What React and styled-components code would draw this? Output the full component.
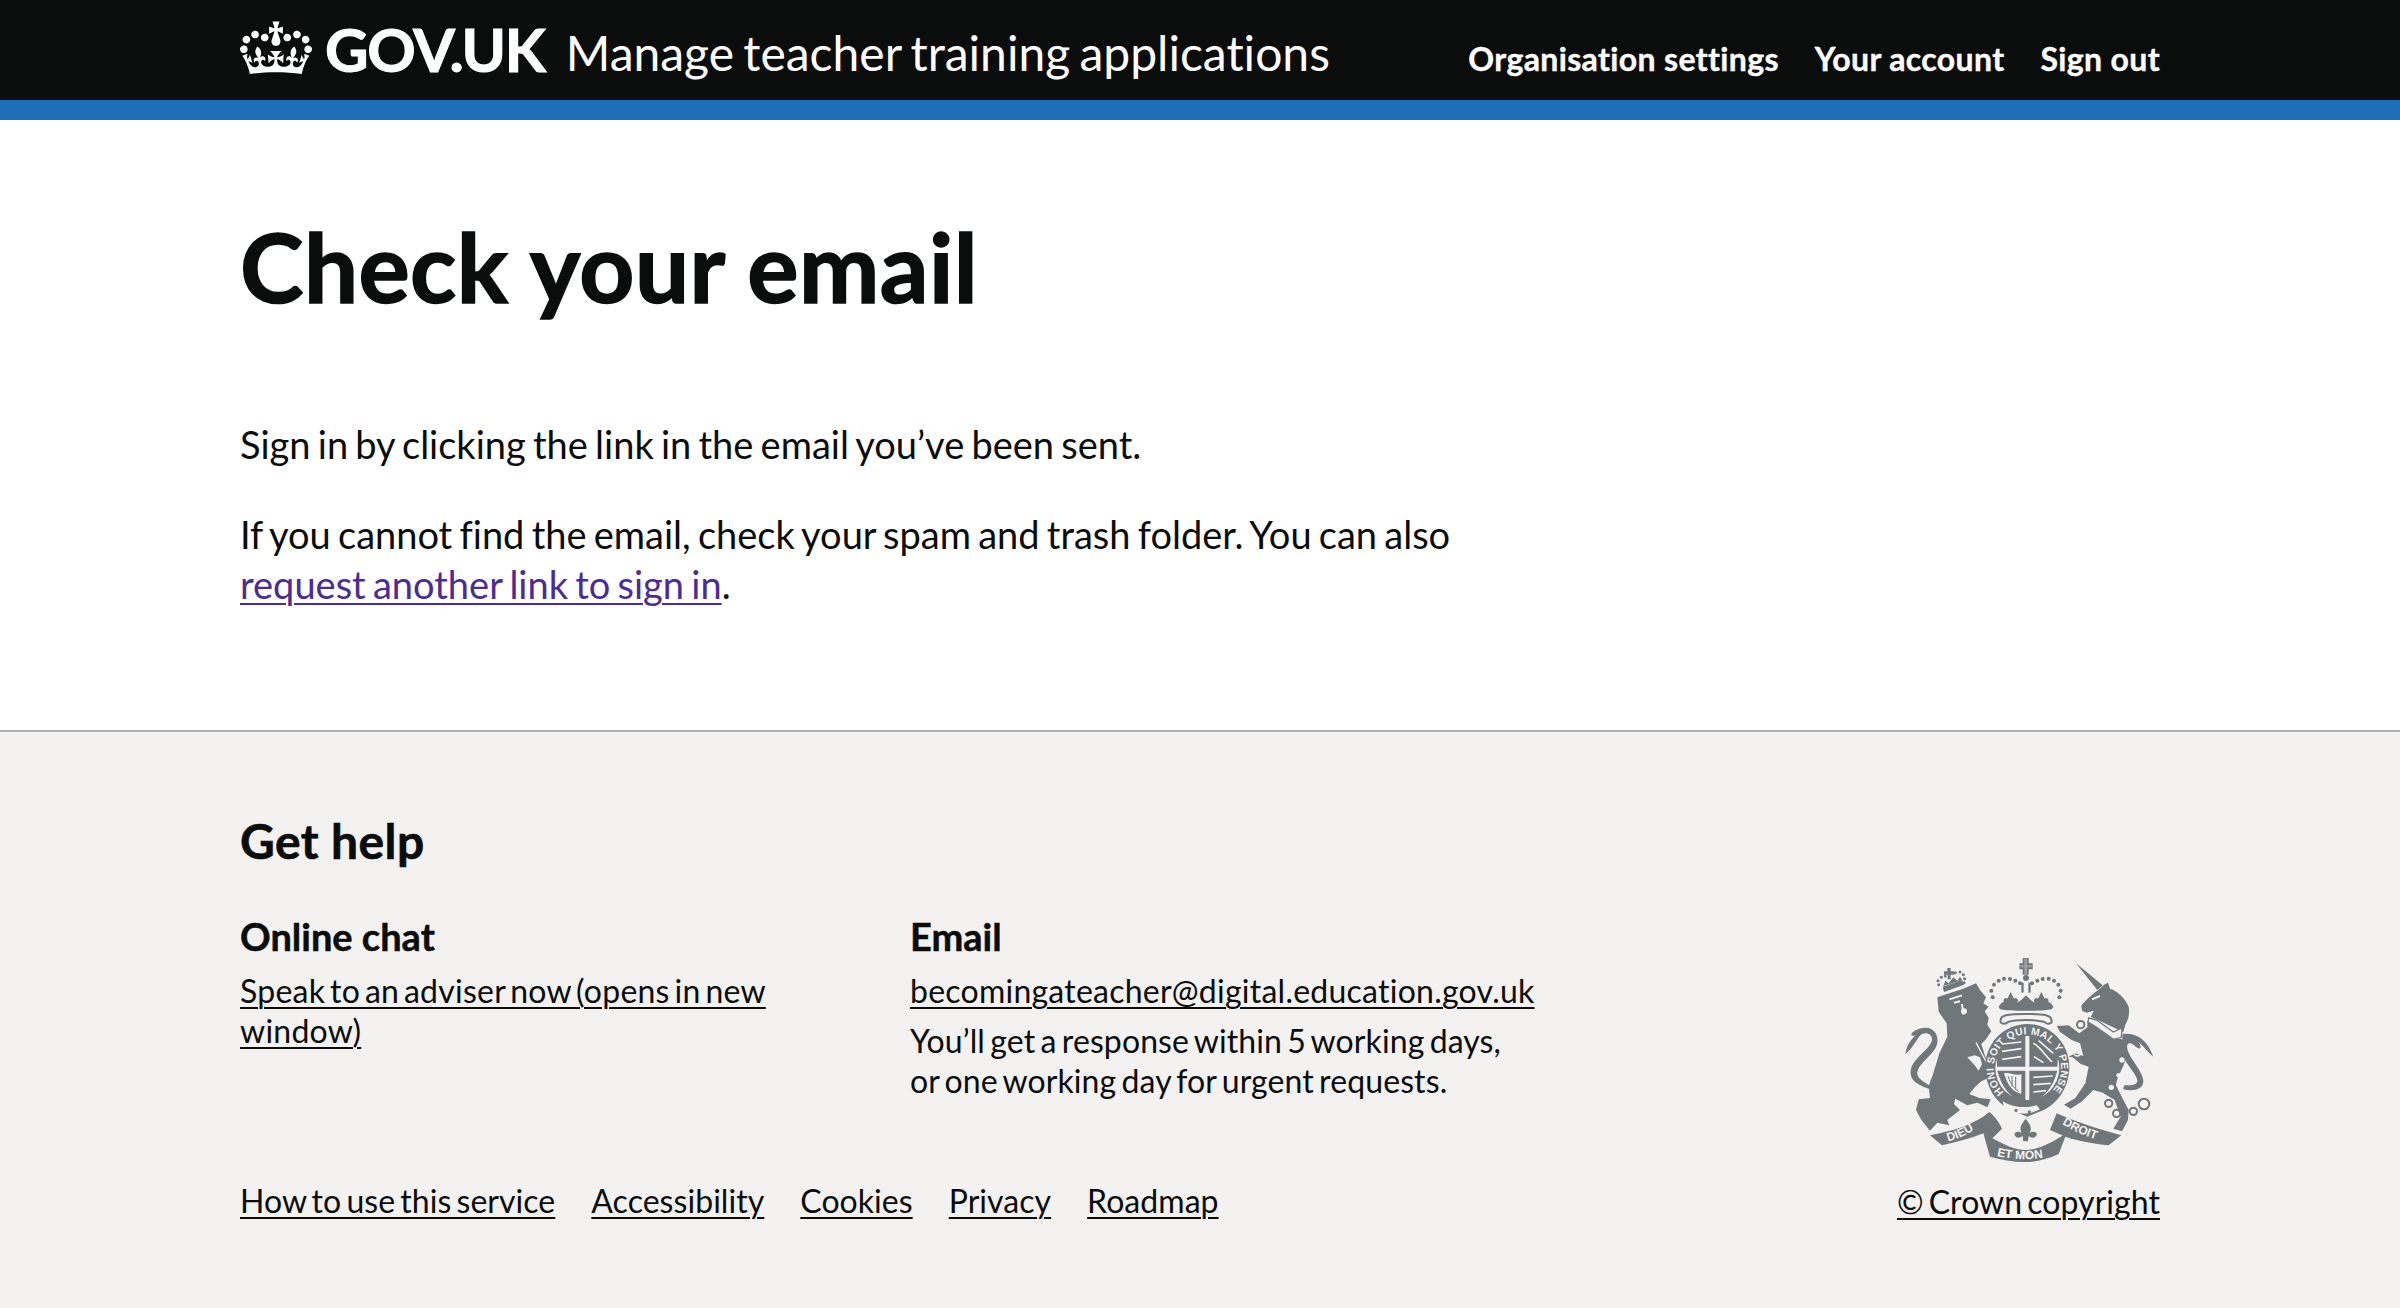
import React from "react";
import styled, { createGlobalStyle } from "styled-components";

const GlobalStyle = createGlobalStyle`
  html, body {
    margin: 0;
    padding: 0;
    background: #f3f2f1;
    color: #0b0c0c;
    font-family: Lato, "Noto Sans", Arial, sans-serif;
    font-variant-ligatures: none;
  }
`;

const Wrapper = styled.div`
  width: 1920px;
  margin: 0 auto;
`;

const Header = styled.header`
  background: #0b0c0c;
  border-bottom: 20px solid #1d70b8;
  height: 100px;
  color: #fff;
`;

const HeaderInner = styled(Wrapper)`
  display: flex;
  justify-content: space-between;
  align-items: flex-start;
`;

const Brand = styled.div`
  display: flex;
  align-items: flex-start;
`;

const Crown = styled.svg`
  width: 72px;
  height: 54px;
  margin-top: 21px;
  fill: currentColor;
`;

const Logotype = styled.span`
  font-size: 60px;
  line-height: 60px;
  font-weight: 700;
  margin: 19px 0 0 13px;
  letter-spacing: -1.2px;
  -webkit-text-stroke: 1px currentColor;
`;

const ServiceName = styled.span`
  font-size: 48px;
  line-height: 60px;
  margin: 23px 0 0 21px;
  word-spacing: -3px;
`;

const Nav = styled.nav`
  display: flex;
  gap: 36px;
  margin-top: 39px;
`;

const NavLink = styled.a`
  color: #fff;
  font-size: 32px;
  line-height: 40px;
  font-weight: 700;
  letter-spacing: 0.36px;
  -webkit-text-stroke: 0.4px currentColor;
`;

const Main = styled.main`
  background: #fff;
  height: 610px;
  overflow: hidden;
`;

const Title = styled.h1`
  margin: 0;
  padding-top: 96px;
  font-size: 96px;
  line-height: 100px;
  font-weight: 700;
  letter-spacing: 0.4px;
  -webkit-text-stroke: 1.5px currentColor;
`;

const Body = styled.div`
  width: 1280px;
  padding-top: 103px;
`;

const Para = styled.p`
  margin: 0 0 40px;
  font-size: 38px;
  line-height: 50px;
  word-spacing: -2.5px;
`;

const VisitedLink = styled.a`
  color: #4c2c92;
  text-decoration: underline;
  text-decoration-thickness: 2px;
  text-underline-offset: 4px;
`;

const Footer = styled.footer`
  background: #f3f2f1;
  border-top: 2px solid #b1b4b6;
  height: 576px;
`;

const FooterInner = styled(Wrapper)`
  display: flex;
  justify-content: space-between;
`;

const FooterMain = styled.div`
  display: flex;
  flex-direction: column;
`;

const HelpTitle = styled.h2`
  margin: 0;
  padding-top: 79px;
  font-size: 48px;
  line-height: 60px;
  font-weight: 700;
  letter-spacing: 0.4px;
  -webkit-text-stroke: 0.6px currentColor;
`;

const HelpColumns = styled.div`
  display: flex;
  gap: 100px;
  padding-top: 40px;
  height: 240px;
  box-sizing: border-box;
`;

const HelpColumn = styled.div`
  width: ${(p) => p.$width}px;
`;

const HelpHeading = styled.h3`
  margin: 0 0 10px;
  font-size: 38px;
  line-height: 50px;
  font-weight: 700;
  -webkit-text-stroke: 0.5px currentColor;
`;

const FooterLink = styled.a`
  color: #0b0c0c;
  font-size: 32px;
  line-height: 40px;
  text-decoration: underline;
  text-decoration-thickness: 2px;
  text-underline-offset: 4px;
  letter-spacing: ${(p) => (p.$help ? "0.24px" : "0.05px")};
  word-spacing: ${(p) => (p.$help ? "-3.6px" : "-3.1px")};
`;

const HelpText = styled.p`
  margin: 10px 0 0;
  font-size: 32px;
  line-height: 40px;
  letter-spacing: 0.1px;
  word-spacing: -3px;
`;

const MetaLinks = styled.div`
  display: flex;
  gap: 36px;
  padding-top: 70px;
`;

const Copyright = styled.div`
  display: flex;
  flex-direction: column;
  align-items: flex-end;
  padding-top: 208px;
`;

const ArmsSvg = styled.svg`
  width: 300px;
  height: 240px;
  margin: 0 -20px 2px 0;
`;

const CROWN_PATH = "M25 30.2c3.5 1.5 7.7-.2 9.1-3.7 1.5-3.6-.2-7.8-3.9-9.2-3.6-1.4-7.6.3-9.1 3.9-1.4 3.5.3 7.5 3.9 9zM9 39.5c3.6 1.5 7.8-.2 9.2-3.7 1.5-3.6-.2-7.8-3.9-9.1-3.6-1.5-7.6.2-9.1 3.8-1.4 3.5.3 7.5 3.8 9zM4.4 57.2c3.5 1.5 7.7-.2 9.1-3.8 1.5-3.6-.2-7.7-3.9-9.1-3.5-1.5-7.6.3-9.1 3.8-1.4 3.5.3 7.6 3.9 9.1zm38.3-21.4c3.5 1.5 7.7-.2 9.1-3.8 1.5-3.6-.2-7.7-3.9-9.1-3.6-1.5-7.6.3-9.1 3.8-1.3 3.6.4 7.7 3.9 9.1zm64.4-5.6c-3.6 1.5-7.8-.2-9.1-3.7-1.5-3.6.2-7.8 3.8-9.2 3.6-1.4 7.7.3 9.2 3.9 1.3 3.5-.4 7.5-3.9 9zm15.9 9.3c-3.6 1.5-7.7-.2-9.1-3.7-1.5-3.6.2-7.8 3.7-9.1 3.6-1.5 7.7.2 9.2 3.8 1.5 3.5-.3 7.5-3.8 9zm4.7 17.7c-3.6 1.5-7.8-.2-9.2-3.8-1.5-3.6.2-7.7 3.9-9.1 3.6-1.5 7.7.3 9.2 3.8 1.3 3.5-.4 7.6-3.9 9.1zM89.3 35.8c-3.6 1.5-7.8-.2-9.2-3.8-1.4-3.6.2-7.7 3.9-9.1 3.6-1.5 7.7.3 9.2 3.8 1.4 3.6-.3 7.7-3.9 9.1zM69.7 17.7l8.9 4.7V9.3l-8.9 2.8c-.2-.3-.5-.6-.9-.9L72.4 0H59.6l3.5 11.2c-.3.3-.6.5-.9.9l-8.8-2.8v13.1l8.8-4.7c.3.3.6.7.9.9l-5 15.4v.1c-.2.8-.4 1.6-.4 2.4 0 4.1 3.1 7.5 7 8.1h.2c.3 0 .7.1 1 .1.4 0 .7 0 1-.1h.2c4-.6 7.1-4.1 7.1-8.1 0-.8-.1-1.7-.4-2.4V34l-5.1-15.4c.4-.2.7-.6 1-.9zM66 92.8c16.9 0 32.8 1.1 47.1 3.2 4-16.9 8.9-26.7 14-33.5l-9.6-3.4c1 4.9 1.1 7.2 0 10.2-1.5-1.4-3-4.3-4.2-8.7L108.6 76c2.8-2 5-3.2 7.5-3.3-4.4 9.4-10 11.9-13.6 11.2-4.3-.8-6.3-4.6-5.6-7.9 1-4.7 5.7-5.9 8-.5 4.3-8.7-3-11.4-7.6-8.8 7.1-7.2 7.9-13.5 2.1-21.1-8 6.1-8.1 12.3-4.5 20.8-4.7-5.4-12.1-2.5-9.5 6.2 3.4-5.2 7.9-2 7.2 3.1-.6 4.3-6.4 7.8-13.5 7.2-10.3-.9-10.9-8-11.2-13.8 2.5-.5 7.1 1.8 11 7.3L80.2 60c-4.1 4.4-8 5.3-12.3 5.4 1.4-4.4 8-11.6 8-11.6H55.5s6.4 7.2 7.9 11.6c-4.2-.1-8-1-12.3-5.4l1.4 16.4c3.9-5.5 8.5-7.7 10.9-7.3-.3 5.8-.9 12.8-11.1 13.8-7.2.6-12.9-2.9-13.5-7.2-.7-5 3.8-8.3 7.1-3.1 2.7-8.7-4.6-11.6-9.4-6.2 3.7-8.5 3.6-14.7-4.6-20.8-5.8 7.6-5 13.9 2.2 21.1-4.7-2.6-11.9.1-7.7 8.8 2.3-5.5 7.1-4.2 8.1.5.7 3.3-1.3 7.1-5.7 7.9-3.5.7-9-1.8-13.5-11.2 2.5.1 4.7 1.3 7.5 3.3l-4.7-15.4c-1.2 4.4-2.7 7.2-4.3 8.7-1.1-3-.9-5.3 0-10.2l-9.5 3.4c5 6.9 9.9 16.7 14 33.5 14.8-2.1 30.8-3.2 47.7-3.2z";

const GREY = "#6f777b";
const BG = "#f3f2f1";
const ARMS_FONT = "'Liberation Sans', Arial, sans-serif";

const BEADS = [[338, 172], [334, 152], [342, 134], [356, 122], [372, 116], [390, 117], [406, 122], [420, 130], [456, 130], [472, 122], [488, 117], [506, 116], [522, 122], [535, 134], [542, 152], [538, 172]];
const LION_BEADS = [[176, 134], [174, 122], [184, 112], [196, 108], [226, 98], [240, 96], [250, 104], [254, 116], [252, 128]];

// coat of arms, drawn in the 900x720 grid of a 3x crop
function CoatOfArms() {
  return (
    <ArmsSvg viewBox="0 0 900 720" aria-label="Royal coat of arms">
      <defs>
        <path id="ringText" d="M372 457 A101 101 0 1 1 512 457" />
        <path id="dieuText" d="M204 604 Q264 590 316 542" />
        <path id="etMonText" d="M350 648 Q435 668 530 646" />
        <path id="droitText" d="M546 552 Q600 586 676 606" />
      </defs>

      {/* lion */}
      <g fill={GREY}>
        <path d="M172 172 L212 158 L250 146 L288 130 L300 150 L318 172 L310 190 L326 200 L314 214 L326 234 L322 254 L334 274 L318 298 L304 312 L316 350 L336 392 L330 412 L304 424 L284 442 L268 462 L298 474 L332 478 L322 502 L292 488 L262 496 L226 476 L222 492 L240 510 L202 540 L208 556 L172 548 L150 572 L124 540 L108 510 L116 478 L150 474 L146 438 L160 400 L178 340 L202 290 L200 250 L176 215 Z" />
        <path d="M128 264 C158 258 176 282 172 308 C166 344 120 362 112 396 C108 412 130 426 152 438 L146 446 C112 434 88 420 92 392 C98 352 154 328 156 298 C156 282 140 276 126 282 C112 290 104 320 76 342 C80 320 88 304 106 286 C84 294 92 270 128 264 Z" />
      </g>
      <path d="M208 178 L246 166 M222 188 L240 184 M246 192 L250 224" stroke={BG} strokeWidth="6" fill="none" />
      <circle cx="252" cy="214" r="9" fill={BG} />
      <path d="M288 308 L322 372" stroke={BG} strokeWidth="4" fill="none" />
      <path d="M262 352 L284 346 L300 352 L306 372 L296 392 L284 376 Z" fill={BG} />

      {/* lion's crown */}
      {LION_BEADS.map(([x, y]) => (
        <circle key={x + "-" + y} cx={x} cy={y} r="4.5" fill={GREY} />
      ))}
      <path d="M188 140 L192 156 L252 134 L246 120 Z" fill={GREY} />
      <path d="M202 94 V84 H212 V94 H222 V104 H212 V118 H203 V104 H192 V94 Z" fill={GREY} />
      <path d="M190 138 L196 122 L206 130 L220 112 L232 122 L240 110 L246 120 Z" fill={GREY} />

      {/* royal crown */}
      <path d="M428 70 V54 H446 V70 H458 V88 H446 V104 H428 V88 H418 V70 Z" fill={GREY} />
      <path d="M433 56 H441 V102 H433 Z M420 76 H456 V82 H420 Z" fill={BG} opacity="0.35" />
      <circle cx="438" cy="114" r="9" fill={GREY} />
      <rect x="424" y="128" width="7" height="30" fill={GREY} />
      <rect x="445" y="128" width="7" height="30" fill={GREY} />
      {BEADS.map(([x, y]) => (
        <circle key={x + "-" + y} cx={x} cy={y} r="6" fill={GREY} />
      ))}
      <path d="M356 200 C362 190 368 186 372 186 C366 178 378 170 382 176 L392 156 L402 176 C408 170 418 178 412 188 L424 180 L438 166 L452 180 L464 188 C458 178 468 170 474 176 L484 156 L494 176 C498 170 510 178 504 186 C508 186 514 190 520 200 L516 208 C490 214 386 214 360 208 Z" fill={GREY} />
      <path d="M362 240 C362 226 380 222 438 222 C496 222 514 226 514 240 C520 252 500 254 494 246 C470 238 406 238 384 246 C376 254 358 252 362 240 Z" fill="none" stroke={GREY} strokeWidth="6" />

      {/* garter and shield */}
      <path d="M442 252 C512 252 568 310 568 380 C568 450 524 500 476 516 L442 530 L408 516 C358 500 316 450 316 380 C316 310 372 252 442 252 Z" fill={GREY} />
      <circle cx="442" cy="384" r="96" fill={BG} />
      <path d="M356 310 C376 290 412 284 436 285 V380 H351 C350 354 348 330 356 310 Z" fill={GREY} />
      <path d="M448 285 C474 284 508 290 528 310 C536 330 534 354 532 380 H448 Z" fill={GREY} />
      <path d="M352 392 H436 V486 C404 484 366 450 352 392 Z" fill={GREY} />
      <path d="M448 392 H532 C518 450 480 484 448 486 Z" fill={GREY} />
      <path d="M368 312 L424 306 M366 334 L424 326 M366 358 L424 350" stroke={BG} strokeWidth="5" />
      <path d="M460 310 C480 320 490 340 516 366 M476 302 L520 340 M462 350 L490 368" stroke={BG} strokeWidth="5" fill="none" />
      <path d="M460 412 L518 408 M460 434 L512 430 M460 456 L498 452" stroke={BG} strokeWidth="5" />
      <path d="M372 400 C390 396 408 410 424 402 L424 462 C402 456 384 442 372 400 Z" fill={BG} />
      <path d="M384 408 C394 438 404 446 416 454 M396 408 V440 M407 410 V448" stroke={GREY} strokeWidth="3" fill="none" />
      <text fontFamily={ARMS_FONT} fontSize="31" fontWeight="700" fill={BG}>
        <textPath href="#ringText" textLength="470">HONI SOIT QUI MAL Y PENSE</textPath>
      </text>
      <path d="M368 484 C392 498 420 508 470 496 L480 508 C440 530 396 520 372 504 Z" fill={BG} />
      <circle cx="408" cy="511" r="5" fill={GREY} />
      <circle cx="448" cy="516" r="5" fill={GREY} />

      {/* unicorn */}
      <g fill={GREY}>
        <path d="M588 70 L668 136 L652 150 Z" />
        <path d="M604 198 C612 184 632 166 652 152 C664 142 672 132 684 128 L690 146 C712 152 736 176 746 200 C750 224 744 240 736 254 L730 276 L722 272 L632 230 L642 212 L620 218 L606 212 Z" />
        <path d="M622 244 L700 298 L724 296 C738 316 742 340 734 366 C726 392 710 412 708 436 L730 480 L746 510 L744 540 L726 574 L700 566 L722 530 L704 480 L668 458 L640 450 L606 484 L572 506 L552 494 L586 474 L616 430 L626 380 L602 372 L578 352 L566 350 L586 340 L610 348 L600 310 L575 300 L540 276 L530 258 L566 256 L598 280 L622 262 Z" />
        <path d="M728 282 C768 278 800 296 820 350 C802 336 790 318 776 306 C790 330 776 330 762 316 C750 304 738 310 742 326 C748 356 790 394 790 424 C790 448 760 456 730 448 L732 434 C754 438 772 434 772 422 C770 396 726 368 724 324 Z" />
      </g>
      <path d="M626 234 L650 240 L700 276 L726 264 L724 292 L700 298 L650 262 L624 246 Z" fill={BG} stroke={GREY} strokeWidth="4" />
      <path d="M636 178 L660 168" stroke={BG} strokeWidth="6" />
      <g fill="none" stroke={GREY} strokeWidth="6">
        <circle cx="602" cy="254" r="11" />
        <circle cx="686" cy="490" r="11" />
        <circle cx="710" cy="520" r="11" />
        <circle cx="760" cy="514" r="11" />
        <circle cx="792" cy="492" r="16" />
      </g>
      <g fill="none" stroke={BG} strokeWidth="5">
        <circle cx="592" cy="338" r="10" />
      </g>
      <g fill={BG}>
        <circle cx="726" cy="360" r="8" />
        <circle cx="716" cy="406" r="7" />
        <circle cx="694" cy="442" r="8" />
        <circle cx="730" cy="432" r="6" />
      </g>

      {/* motto scrolls */}
      <g fill={GREY}>
        <path d="M150 586 C220 572 280 556 328 516 C346 530 360 552 366 566 L336 596 L310 580 C270 596 230 606 186 616 Z" />
        <path d="M310 580 C350 600 392 630 436 630 C480 630 520 604 560 580 L536 642 C500 658 470 666 436 666 C396 666 360 658 330 650 Z" />
        <path d="M530 520 C590 546 650 566 724 586 L686 616 C640 610 596 604 556 590 L510 570 Z" />
      </g>
      <path d="M437 536 C450 552 458 566 448 580 C464 568 478 582 466 590 C460 596 450 592 446 588 L444 604 H430 L428 588 C422 592 414 596 408 590 C396 582 410 568 426 580 C416 566 424 552 437 536 Z" fill={GREY} />
      <g fontFamily={ARMS_FONT} fontWeight="700" fontSize="36" fill={BG}>
        <text><textPath href="#dieuText">DIEU</textPath></text>
        <text><textPath href="#etMonText">ET MON</textPath></text>
        <text><textPath href="#droitText">DROIT</textPath></text>
      </g>
    </ArmsSvg>
  );
}

export default function App() {
  return (
    <>
      <GlobalStyle />
      <Header>
        <HeaderInner>
          <Brand>
            <Crown viewBox="0 0 132 97" aria-hidden="true">
              <path fillRule="evenodd" d={CROWN_PATH} />
            </Crown>
            <Logotype>GOV.UK</Logotype>
            <ServiceName>Manage teacher training applications</ServiceName>
          </Brand>
          <Nav>
            <NavLink>Organisation settings</NavLink>
            <NavLink>Your account</NavLink>
            <NavLink>Sign out</NavLink>
          </Nav>
        </HeaderInner>
      </Header>
      <Main>
        <Wrapper>
          <Title>Check your email</Title>
          <Body>
            <Para>Sign in by clicking the link in the email you’ve been sent.</Para>
            <Para>
              If you cannot find the email, check your spam and trash folder. You can also{" "}
              <VisitedLink href="#">request another link to sign in</VisitedLink>.
            </Para>
          </Body>
        </Wrapper>
      </Main>
      <Footer>
        <FooterInner>
          <FooterMain>
            <HelpTitle>Get help</HelpTitle>
            <HelpColumns>
              <HelpColumn $width={570}>
                <HelpHeading>Online chat</HelpHeading>
                <FooterLink href="#" $help>Speak to an adviser now (opens in new window)</FooterLink>
              </HelpColumn>
              <HelpColumn $width={640}>
                <HelpHeading>Email</HelpHeading>
                <FooterLink href="#" $help>becomingateacher@digital.education.gov.uk</FooterLink>
                <HelpText>
                  You’ll get a response within 5 working days,
                  <br />
                  or one working day for urgent requests.
                </HelpText>
              </HelpColumn>
            </HelpColumns>
            <MetaLinks>
              <FooterLink href="#">How to use this service</FooterLink>
              <FooterLink href="#">Accessibility</FooterLink>
              <FooterLink href="#">Cookies</FooterLink>
              <FooterLink href="#">Privacy</FooterLink>
              <FooterLink href="#">Roadmap</FooterLink>
            </MetaLinks>
          </FooterMain>
          <Copyright>
            <CoatOfArms />
            <FooterLink href="#">© Crown copyright</FooterLink>
          </Copyright>
        </FooterInner>
      </Footer>
    </>
  );
}
